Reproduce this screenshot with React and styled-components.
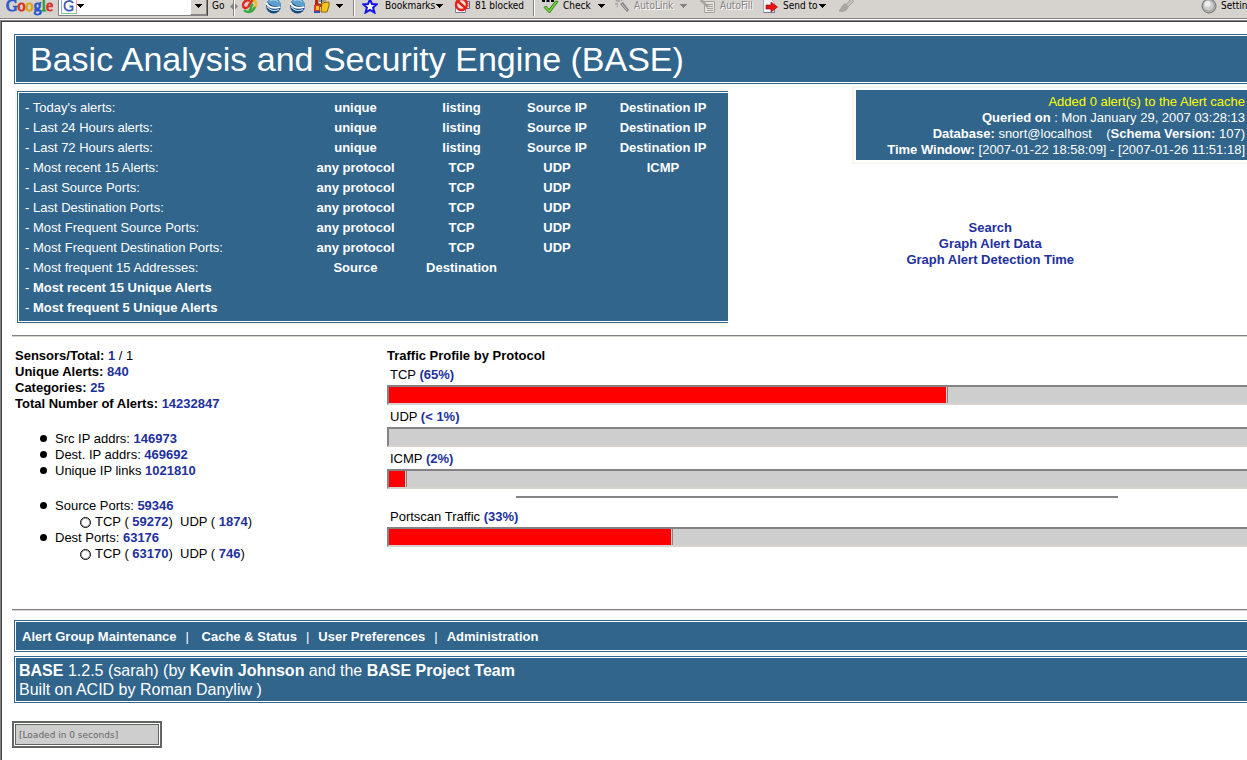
import React from 'react';
import styled, { createGlobalStyle, css } from 'styled-components';

const blue = '#31658c';
const linkBlue = '#21309c';
const chrome = '#d6d3ce';
const shade = '#848284';
const cream = '#f7f7ef';

const GlobalStyle = createGlobalStyle`
  * {
    box-sizing: border-box;
  }

  body {
    margin: 0;
    background: #fff;
    color: #000;
    font-family: 'Liberation Sans', Arial, sans-serif;
    font-size: 13px;
    line-height: 16px;
  }

  a {
    color: ${linkBlue};
    font-weight: bold;
    text-decoration: none;
  }
`;

const Screen = styled.div`
  display: flex;
  flex-direction: column;
  min-height: 100vh;
  overflow: hidden;
`;

/* browser toolbar */

const Toolbar = styled.header`
  height: 19px;
  padding: 0 0 6px 6px;
  background: ${chrome};
  border-bottom: 1px solid ${shade};
  display: flex;
  align-items: center;
  overflow: hidden;
  white-space: nowrap;
  font-family: 'DejaVu Sans Condensed', 'DejaVu Sans', sans-serif;
  font-size: 10px;
  line-height: 12px;
`;

const Logo = styled.div`
  flex: none;
  width: 52px;
  font-family: 'Liberation Serif', serif;
  font-size: 16px;
  line-height: 12px;
`;

const LogoLetter = styled.span`
  color: ${(props) => props.$color};
  -webkit-text-stroke: 1px ${(props) => props.$color};
`;

const SearchBox = styled.div`
  flex: none;
  display: flex;
  align-items: center;
  width: 150px;
  height: 20px;
  padding-left: 2px;
  background: #fff;
  border: 1px solid ${shade};
  border-right-color: #404040;

  input {
    flex: 1;
    min-width: 0;
    height: 16px;
    border: 0;
    padding: 0 4px;
    outline: none;
    background: transparent;
  }
`;

const DropButton = styled.button`
  flex: none;
  width: 17px;
  height: 18px;
  padding: 0;
  display: flex;
  align-items: center;
  justify-content: center;
  background: ${chrome};
  border: 1px solid #fff;
  border-right-color: ${shade};
  border-bottom-color: ${shade};
`;

const ToolButton = styled.button`
  flex: none;
  display: flex;
  align-items: center;
  gap: ${(props) => props.$gap || 4}px;
  width: ${(props) => props.$width}px;
  height: 18px;
  padding: 0;
  border: 0;
  background: none;
  color: #000;
  font: inherit;
  white-space: nowrap;

  &:disabled {
    color: ${shade};
    text-shadow: 1px 1px 0 #fff;
  }

  svg {
    flex: none;
  }
`;

const GoButton = styled(ToolButton)`
  padding-left: 4px;
`;

const SettingsButton = styled(ToolButton)`
  margin-left: auto;
`;

const MenuLabel = styled.span`
  display: inline-flex;
  align-items: center;
  gap: 1px;
`;

const Separator = styled.span`
  flex: none;
  width: 2px;
  height: 20px;
  margin-right: 7px;
  background: ${shade};
  border-right: 1px solid #fff;
`;

/* page */

const Viewport = styled.div`
  flex: 1;
  display: flex;
  margin-top: 1px;
  border-top: 1px solid ${shade};
  border-left: 1px solid ${shade};
`;

const Page = styled.main`
  flex: 1;
  min-width: 0;
  padding: 12px 0 0 10px;
  border-top: 1px solid #404040;
  border-left: 1px solid #404040;
`;

const Frame = styled.div`
  margin-left: 2px;
  background: ${blue};
  background-clip: padding-box;
  border: 3px double ${blue};
  border-right: 0;
  color: #fff;

  a {
    color: #fff;
  }
`;

const Title = styled(Frame).attrs({ as: 'h1' })`
  margin-top: 0;
  margin-bottom: 0;
  padding: 2px 13px;
  font-size: 34px;
  line-height: 40px;
  font-weight: normal;
`;

const Overview = styled.section`
  display: flex;
  justify-content: space-between;
  padding: 2px 0 0 3px;
`;

const SummaryBorder = styled.div`
  margin-top: 3px;
  border: 2px solid ${cream};
  border-right: 0;
`;

const Summary = styled(Frame)`
  margin-left: 0;
  padding: 4px 2px 2px;
`;

const AlertTable = styled.table`
  border-collapse: collapse;
  table-layout: fixed;
  width: 704px;

  th,
  td {
    height: 20px;
    padding: 0;
    text-align: center;
  }

  th {
    padding-left: 3px;
    font-weight: normal;
    text-align: left;
  }
`;

const SideColumn = styled.div`
  width: 395px;
`;

const QueryBorder = styled.div`
  border: 2px solid ${cream};
  border-right: 0;
  padding: 2px 0 2px 2px;
`;

const QueryInfo = styled.div`
  padding: 4px 2px 2px;
  background: ${blue};
  color: #fff;
  text-align: right;
`;

const Notice = styled.div`
  color: #ff0;
`;

const SideLinks = styled.nav`
  width: 70%;
  padding-top: 56px;
  display: flex;
  flex-direction: column;
  align-items: center;
`;

const Rule = styled.hr`
  margin: ${(props) => props.$margin};
  border: 0;
  border-top: 1px solid ${shade};
  border-bottom: 1px solid ${chrome};
`;

const Statistics = styled.section`
  display: grid;
  grid-template-columns: 372px 1fr;
  padding-left: 3px;
`;

const List = styled.ul`
  list-style: none;
  margin: ${(props) => (props.$nested ? 0 : '19px')} 0 0;
  padding: 0 0 0 25px;
`;

const Item = styled.li`
  display: grid;
  grid-template-columns: 15px 1fr;

  &::before {
    content: '';
    width: 7px;
    height: 7px;
    margin-top: 4px;
    border-radius: 50%;
    background: #000;

    ${(props) =>
      props.$hollow &&
      css`
        width: 9px;
        height: 9px;
        margin-top: 3px;
        background: none;
        border: 1px solid #000;
        box-shadow: inset 0 0 0 1px #aaa;
      `}
  }
`;

const Traffic = styled.div`
  display: flex;
  flex-direction: column;
`;

const TrafficTitle = styled.b`
  height: 15px;
`;

const TrafficLabel = styled.div`
  padding: 2px 0 0 3px;
  line-height: 20px;
`;

const Track = styled.div`
  display: flex;
  height: 20px;
  background: #cecece;
  border: 2px solid ${shade};
  border-right: 0;
  border-bottom-color: ${chrome};
`;

const Fill = styled.div`
  background: #f00;
  border-right: 1px solid ${chrome};
`;

const Remainder = styled.div`
  flex: 1;
  border-left: 1px solid ${shade};
`;

const TrafficRule = styled.hr`
  width: 70%;
  height: 2px;
  margin: 7px auto;
  border: 0;
  background: ${shade};
`;

const Menu = styled(Frame).attrs({ as: 'nav' })`
  display: flex;
  gap: 9px;
  padding: 6px 5px 4px;
`;

const Credits = styled(Frame).attrs({ as: 'footer' })`
  margin-top: 4px;
  padding: 2px 2px 1px;
  font-size: 16px;
  line-height: 19px;
`;

const LoadTime = styled.div`
  width: 150px;
  margin-top: 18px;
  padding: 1px;
  border: 2px solid #636563;

  p {
    margin: 0;
    padding: 4px 3px 2px;
    border: 1px solid #636563;
    background: #cecece;
    color: #636563;
    font-family: 'DejaVu Sans', sans-serif;
    font-size: 9px;
    line-height: 13px;
  }
`;

/* icons */

const Caret = ({ color = '#000' }) => (
  <svg width="7" height="4" viewBox="0 0 7 4" shapeRendering="crispEdges">
    <path d="M0 0h7L3.5 4z" fill={color} />
  </svg>
);

const GoogleIcon = () => (
  <svg width="16" height="16" viewBox="0 0 16 16">
    <rect width="16" height="16" fill="#fff" />
    <path d="M0 .5h16" stroke="#5a86d8" />
    <path d="M.5 0v16" stroke="#8ca8e8" />
    <path d="M15.5 0v16" stroke="#f09a9a" />
    <path d="M0 15.5h16" stroke="#7cc88a" />
    <path
      d="M12 5C10.5 1.800 3.500 2.200 3.500 7.700c0 5.600 6 5.500 8 4V8.500H8.500"
      fill="none"
      stroke="#3a5cb8"
      strokeWidth="1.800"
    />
  </svg>
);

const Handle = () => (
  <svg width="8" height="20" viewBox="0 0 8 20">
    <path d="M3.500 0v20" stroke="#848284" />
    <path d="M4.500 0v20" stroke="#fff" />
    <path d="M0 10.500l3-3v6zM8 10.500l-3-3v6z" fill="#848284" />
  </svg>
);

const SwirlIcon = () => (
  <svg width="17" height="16" viewBox="0 0 17 16" fill="none" strokeWidth="2.400">
    <path d="M9 3C6 1 2 4 2 7c0 3 3 4 5 2" stroke="#e0281c" />
    <path d="M7 9c2-2 2-5 5-7" stroke="#e0281c" />
    <path d="M12 2c4 1 4 6 1 8" stroke="#efb916" />
    <path d="M3 12c3 3 8 3 11-3" stroke="#35a83a" />
    <path d="M8 13c3-2 1-5 4-7" stroke="#35a83a" />
  </svg>
);

const EarthIcon = () => (
  <svg width="17" height="16" viewBox="0 0 17 16">
    <circle cx="8.500" cy="8" r="7.500" fill="#174a80" />
    <path d="M2 4c2-4 10-5 13 0 1 2 1 4 0 5C10 9 5 7 2 4z" fill="#5f9fd0" />
    <path d="M1.500 5c2 4 7 6 14 4" fill="none" stroke="#fff" strokeWidth="1.800" />
    <path d="M2 8.500c3 4 7 5 12 3" fill="none" stroke="#d8ecfa" strokeWidth="1.200" />
    <path d="M5 3c3-2 6-1 8 1" fill="none" stroke="#b6dbf3" />
  </svg>
);

const BlocksIcon = () => (
  <svg width="17" height="16" viewBox="0 0 17 16">
    <path d="M2 2h7v7H2z" fill="#c41f17" />
    <path d="M5 0h7v6H5z" fill="#fff" stroke="#70512a" />
    <path d="M6 3h5M8.500 1v4" stroke="#333" />
    <path d="M9 5l7-1v4l-2 6H8z" fill="#f4c51d" stroke="#8c6a0a" />
    <path d="M1 7h6v6H1z" fill="#e4382a" />
    <path d="M3 8h3v4H3z" fill="#f6cc1b" />
    <path d="M1 13h6v2H1z" fill="#2c50ac" />
  </svg>
);

const StarIcon = () => (
  <svg width="16" height="16" viewBox="0 0 16 16">
    <path
      d="M8 1.500l2 4.500 4.700.4-3.600 3.200 1.300 4.900L8 12l-4.400 2.500 1.300-4.900L1.300 6.400 6 6z"
      fill="#fff"
      stroke="#1010f0"
      strokeWidth="2"
    />
  </svg>
);

const BlockedIcon = () => (
  <svg width="17" height="16" viewBox="0 0 17 16">
    <path d="M1.500 7.500h10v7h-10z" fill="#f4f4f4" stroke="#7d7d9b" />
    <path d="M9 3.500h6.500v7H10" fill="#fff3a8" stroke="#5f5fa5" />
    <circle cx="7.500" cy="6.500" r="5.500" fill="#ffe0dc" stroke="#e0201a" strokeWidth="2.400" />
    <path d="M3.500 3l8 7" stroke="#e0201a" strokeWidth="2.400" />
    <path d="M14 5v4" stroke="#f07020" />
  </svg>
);

const CheckIcon = () => (
  <svg width="17" height="18" viewBox="0 0 17 18">
    <path d="M0 4h3M4.500 4h3M9 4h3" stroke="#000" strokeWidth="2" />
    <path
      d="M2 10.500l2-1.500 3 3.500L13.500 4 16 4.500 7.500 16z"
      fill="#75d63c"
      stroke="#347e22"
    />
  </svg>
);

const WandIcon = () => (
  <svg width="15" height="16" viewBox="0 0 15 16">
    <path d="M5 6l3-2 6 8-2 2z" fill="#848284" />
    <path d="M7 6l5 6" stroke="#c9c7c2" />
    <path d="M4 1v3M0 6h3M1 2l2 2M7 2L6 3M2 9l1-1" stroke="#a5a29d" strokeWidth="1.500" />
  </svg>
);

const FormIcon = () => (
  <svg width="16" height="16" viewBox="0 0 16 16" fill="none">
    <path d="M4.500 3.500h10v11h-10z" fill="#e4e2de" stroke="#a5a29d" />
    <path d="M7 6.500h6M7 8.500h6M7 10.500h6M7 12.500h6" stroke="#a5a29d" />
    <path d="M1 2l7 7" stroke="#a5a29d" strokeWidth="2.500" />
    <path d="M0 3.500h5" stroke="#a5a29d" />
  </svg>
);

const SendIcon = () => (
  <svg width="17" height="16" viewBox="0 0 17 16">
    <path d="M1.500 1.500h8l3 3v10h-11z" fill="#f2f2fa" stroke="#a8a8b8" />
    <path d="M1.500 14.500h11v-3" fill="none" stroke="#77779a" />
    <path d="M4 7h5V4l6.500 5L9 14v-3H4z" fill="#ee1212" stroke="#850808" strokeWidth=".6" />
  </svg>
);

const BrushIcon = () => (
  <svg width="16" height="16" viewBox="0 0 16 16">
    <path d="M8 7l4-5c2-2 4 0 3 2l-5 5z" fill="#c3c0bb" stroke="#a5a29d" />
    <path d="M8 6c-4 0-4 4-7 7 4 1 8 0 9-4z" fill="#aaa7a2" stroke="#a5a29d" />
  </svg>
);

const BallIcon = () => (
  <svg width="16" height="16" viewBox="0 0 16 16">
    <circle cx="8" cy="8" r="7" fill="#aaa" stroke="#777" />
    <circle cx="7.500" cy="7.500" r="5" fill="#ccc" />
    <circle cx="6.500" cy="6" r="3" fill="#eee" />
  </svg>
);

/* data */

const logo = [
  ['G', '#2a5bd0'],
  ['o', '#d8352a'],
  ['o', '#e0a40c'],
  ['g', '#2a5bd0'],
  ['l', '#2b9a3e'],
  ['e', '#d8352a'],
];

const alertRows = [
  ["Today's alerts:", 'unique', 'listing', 'Source IP', 'Destination IP'],
  ['Last 24 Hours alerts:', 'unique', 'listing', 'Source IP', 'Destination IP'],
  ['Last 72 Hours alerts:', 'unique', 'listing', 'Source IP', 'Destination IP'],
  ['Most recent 15 Alerts:', 'any protocol', 'TCP', 'UDP', 'ICMP'],
  ['Last Source Ports:', 'any protocol', 'TCP', 'UDP', ''],
  ['Last Destination Ports:', 'any protocol', 'TCP', 'UDP', ''],
  ['Most Frequent Source Ports:', 'any protocol', 'TCP', 'UDP', ''],
  ['Most Frequent Destination Ports:', 'any protocol', 'TCP', 'UDP', ''],
  ['Most frequent 15 Addresses:', 'Source', 'Destination', '', ''],
];

const uniqueRows = ['Most recent 15 Unique Alerts', 'Most frequent 5 Unique Alerts'];

const protocols = [
  { name: 'TCP', label: '65%', percent: 65 },
  { name: 'UDP', label: '< 1%', percent: 0 },
  { name: 'ICMP', label: '2%', percent: 2 },
];

const BrowserToolbar = () => (
  <Toolbar>
    <Logo>
      {logo.map(([letter, color], i) => (
        <LogoLetter key={i} $color={color}>
          {letter}
        </LogoLetter>
      ))}
    </Logo>
    <SearchBox>
      <GoogleIcon />
      <Caret />
      <input type="text" aria-label="Google search" />
      <DropButton aria-label="Search history">
        <Caret />
      </DropButton>
    </SearchBox>
    <GoButton $width={22}>Go</GoButton>
    <ToolButton $width={11} aria-label="Resize search box">
      <Handle />
    </ToolButton>
    <ToolButton $width={24} aria-label="Google services">
      <SwirlIcon />
    </ToolButton>
    <ToolButton $width={24} aria-label="Earth">
      <EarthIcon />
    </ToolButton>
    <ToolButton $width={24} aria-label="Maps">
      <EarthIcon />
    </ToolButton>
    <ToolButton $width={40} $gap={6} aria-label="More buttons">
      <BlocksIcon />
      <Caret />
    </ToolButton>
    <Separator />
    <ToolButton $width={92} $gap={7}>
      <StarIcon />
      <MenuLabel>
        Bookmarks
        <Caret />
      </MenuLabel>
    </ToolButton>
    <ToolButton $width={79}>
      <BlockedIcon />
      81 blocked
    </ToolButton>
    <Separator />
    <ToolButton $width={73}>
      <CheckIcon />
      Check&nbsp;
      <Caret />
    </ToolButton>
    <ToolButton $width={85} disabled>
      <WandIcon />
      AutoLink&nbsp;
      <Caret color="#848284" />
    </ToolButton>
    <ToolButton $width={62} disabled>
      <FormIcon />
      AutoFill
    </ToolButton>
    <ToolButton $width={76}>
      <SendIcon />
      <MenuLabel>
        Send to
        <Caret />
      </MenuLabel>
    </ToolButton>
    <ToolButton $width={16} aria-label="Highlight" disabled>
      <BrushIcon />
    </ToolButton>
    <SettingsButton $width={46}>
      <BallIcon />
      Settings
    </SettingsButton>
  </Toolbar>
);

const AlertSummary = () => (
  <SummaryBorder>
    <Summary>
      <AlertTable>
        <colgroup>
          <col width="280" />
          <col width="107" />
          <col width="105" />
          <col width="86" />
          <col width="126" />
        </colgroup>
        <tbody>
          {alertRows.map(([name, ...links]) => (
            <tr key={name}>
              <th scope="row">- {name}</th>
              {links.map((link, i) => (
                <td key={i}>{link ? <a href="#alerts">{link}</a> : ''}</td>
              ))}
            </tr>
          ))}
          {uniqueRows.map((name) => (
            <tr key={name}>
              <th scope="row" colSpan="5">
                - <a href="#unique">{name}</a>
              </th>
            </tr>
          ))}
        </tbody>
      </AlertTable>
    </Summary>
  </SummaryBorder>
);

const TrafficBar = (props) => {
  const { name, label, percent } = props;

  return (
    <>
      <TrafficLabel>
        {name} <a href="#traffic">({label})</a>
      </TrafficLabel>
      <Track role="img" aria-label={`${name} ${label}`}>
        {percent > 0 ? (
          <>
            <Fill style={{ width: `${percent}%` }} />
            <Remainder />
          </>
        ) : (
          ''
        )}
      </Track>
    </>
  );
};

const PortItem = ({ tcp, udp }) => (
  <List $nested>
    <Item $hollow>
      <span>
        TCP ( <a href="#tcp">{tcp}</a>)&nbsp; UDP ( <a href="#udp">{udp}</a>)
      </span>
    </Item>
  </List>
);

const Counters = () => (
  <div>
    <div>
      <b>Sensors/Total:</b> <a href="#sensors">1</a> / 1
    </div>
    <div>
      <b>Unique Alerts:</b> <a href="#unique">840</a>
    </div>
    <div>
      <b>Categories:</b> <a href="#categories">25</a>
    </div>
    <div>
      <b>Total Number of Alerts:</b> <a href="#total">14232847</a>
    </div>
    <List>
      <Item>
        <span>
          Src IP addrs: <a href="#src">146973</a>
        </span>
      </Item>
      <Item>
        <span>
          Dest. IP addrs: <a href="#dest">469692</a>
        </span>
      </Item>
      <Item>
        <span>
          Unique IP links <a href="#links">1021810</a>
        </span>
      </Item>
    </List>
    <List>
      <Item>
        <div>
          Source Ports: <a href="#sport">59346</a>
          <PortItem tcp="59272" udp="1874" />
        </div>
      </Item>
      <Item>
        <div>
          Dest Ports: <a href="#dport">63176</a>
          <PortItem tcp="63170" udp="746" />
        </div>
      </Item>
    </List>
  </div>
);

const App = () => (
  <Screen>
    <GlobalStyle />
    <BrowserToolbar />
    <Viewport>
      <Page>
        <Title>Basic Analysis and Security Engine (BASE)</Title>
        <Overview>
          <AlertSummary />
          <SideColumn>
            <QueryBorder>
              <QueryInfo>
                <Notice>Added 0 alert(s) to the Alert cache</Notice>
                <div>
                  <b>Queried on</b> : Mon January 29, 2007 03:28:13
                </div>
                <div>
                  <b>Database:</b> snort@localhost &nbsp;&nbsp; (<b>Schema Version:</b> 107)
                </div>
                <div>
                  <b>Time Window:</b> [2007-01-22 18:58:09] - [2007-01-26 11:51:18]
                </div>
              </QueryInfo>
            </QueryBorder>
            <SideLinks>
              <a href="#search">Search</a>
              <a href="#graph">Graph Alert Data</a>
              <a href="#time">Graph Alert Detection Time</a>
            </SideLinks>
          </SideColumn>
        </Overview>
        <Rule $margin="10px 0 11px" />
        <Statistics>
          <Counters />
          <Traffic>
            <TrafficTitle>Traffic Profile by Protocol</TrafficTitle>
            {protocols.map((protocol) => (
              <TrafficBar key={protocol.name} {...protocol} />
            ))}
            <TrafficRule />
            <TrafficBar name="Portscan Traffic" label="33%" percent={33} />
          </Traffic>
        </Statistics>
        <Rule $margin="47px 0 9px" />
        <Menu>
          <a href="#groups">Alert Group Maintenance</a>
          <span>|</span>
          <a href="#cache">&nbsp;Cache &amp; Status</a>
          <span>|</span>
          <a href="#preferences">User Preferences</a>
          <span>|</span>
          <a href="#admin">Administration</a>
        </Menu>
        <Credits>
          <a href="#base">BASE</a> 1.2.5 (sarah) (by <a href="#kevin">Kevin Johnson</a> and the{' '}
          <a href="#team">BASE Project Team</a>
          <br />
          Built on ACID by Roman Danyliw )
        </Credits>
        <LoadTime>
          <p>[Loaded in 0 seconds]</p>
        </LoadTime>
      </Page>
    </Viewport>
  </Screen>
);

export default App;
